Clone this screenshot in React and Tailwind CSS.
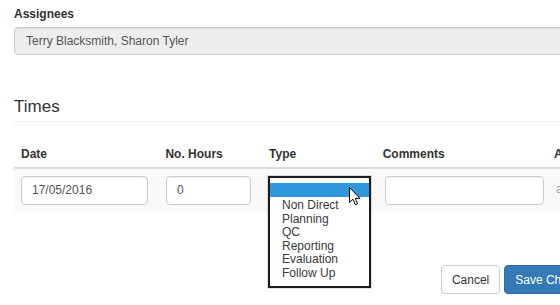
import React from 'react';

const typeOptions = ['Non Direct', 'Planning', 'QC', 'Reporting', 'Evaluation', 'Follow Up'];

const inputCls =
  'h-[28px] rounded-[4px] border border-[#cccccc] bg-white px-[10px] text-[12px] leading-[26px] text-[#555555] shadow-[inset_0_1px_1px_rgba(0,0,0,0.075)]';

const Cursor = () => (
  <svg width="12" height="19" viewBox="0 0 12 19" className="absolute left-[79px] top-[9px]">
    <path
      d="M0.5 0.5 L0.5 15.5 L4 12.2 L6.4 17.8 L8.6 16.8 L6.3 11.4 L11 11.4 Z"
      fill="#ffffff"
      stroke="#000000"
      strokeWidth="1"
      strokeLinejoin="round"
    />
  </svg>
);

export default function App() {
  return (
    <div className="w-[560px] h-[305px] overflow-hidden bg-white font-['Liberation_Sans',Arial,sans-serif] text-[12px] text-[#333333]">
      <div className="w-[619px] px-[14px] pt-[6px]">
        {/* Assignees */}
        <div className="font-bold leading-[17px] mb-[4px]">Assignees</div>
        <div className="h-[28px] rounded-[4px] border border-[#cccccc] bg-[#eeeeee] px-[11px] leading-[26px] text-[#555555] shadow-[inset_0_1px_1px_rgba(0,0,0,0.075)]">
          Terry Blacksmith, Sharon Tyler
        </div>

        {/* Times heading */}
        <div className="mt-[42px] pb-[4px] border-b border-[#eeeeee] text-[17px] leading-[20px] text-[#333333]">
          Times
        </div>

        {/* Table header */}
        <div className="mt-[16px] flex h-[31px] items-center pt-[3px] border-b-2 border-[#dddddd] font-bold">
          <div className="w-[145px] px-[7px]">Date</div>
          <div className="w-[104px] px-[7px]">No. Hours</div>
          <div className="w-[114px] px-[7px]">Type</div>
          <div className="w-[172px] px-[7px]">Comments</div>
          <div className="px-[7px]">Actions</div>
        </div>

        {/* Row */}
        <div className="flex bg-[#f9f9f9] pt-[7px] pb-[8px]">
          <div className="w-[145px] px-[7px]">
            <div className={`${inputCls} w-[127px] h-[29px]`}>17/05/2016</div>
          </div>
          <div className="w-[104px] px-[7px]">
            <div className={`${inputCls} w-[85px] h-[29px]`}>0</div>
          </div>
          <div className="relative w-[114px] px-[7px]">
            <div className={`${inputCls} w-[100px] h-[29px]`} />
            {/* open dropdown list */}
            <div className="absolute left-[5px] top-[0px] z-10 w-[103px] h-[112px] border-2 border-[#1b1b1b] bg-white pt-[5px] shadow-[0_0_0_1px_rgba(0,0,0,0.12)]">
              <div className="h-[14px] bg-[#3197dc]" />
              <div className="pt-[2px] pl-[12px] text-[12px] text-[#3a3a3a]">
                {typeOptions.map((o) => (
                  <div key={o} className="h-[13.6px] leading-[13.6px]">
                    {o}
                  </div>
                ))}
              </div>
              <Cursor />
            </div>
          </div>
          <div className="w-[172px] px-[7px]">
            <div className={`${inputCls} ml-[1px] w-[159px] h-[29px]`} />
          </div>
          <div className="px-[7px] pt-[4px] text-[#999999]">a</div>
        </div>

        {/* Buttons */}
        <div className="mt-[52px] flex justify-end gap-[4px]">
          <button className="h-[29px] rounded-[4px] border border-[#cccccc] bg-white px-[10px] text-[12px] text-[#333333]">
            Cancel
          </button>
          <button className="h-[29px] rounded-[4px] border border-[#2e6da4] bg-[#337ab7] px-[10px] text-[12px] text-white">
            Save Changes
          </button>
        </div>
      </div>
    </div>
  );
}
